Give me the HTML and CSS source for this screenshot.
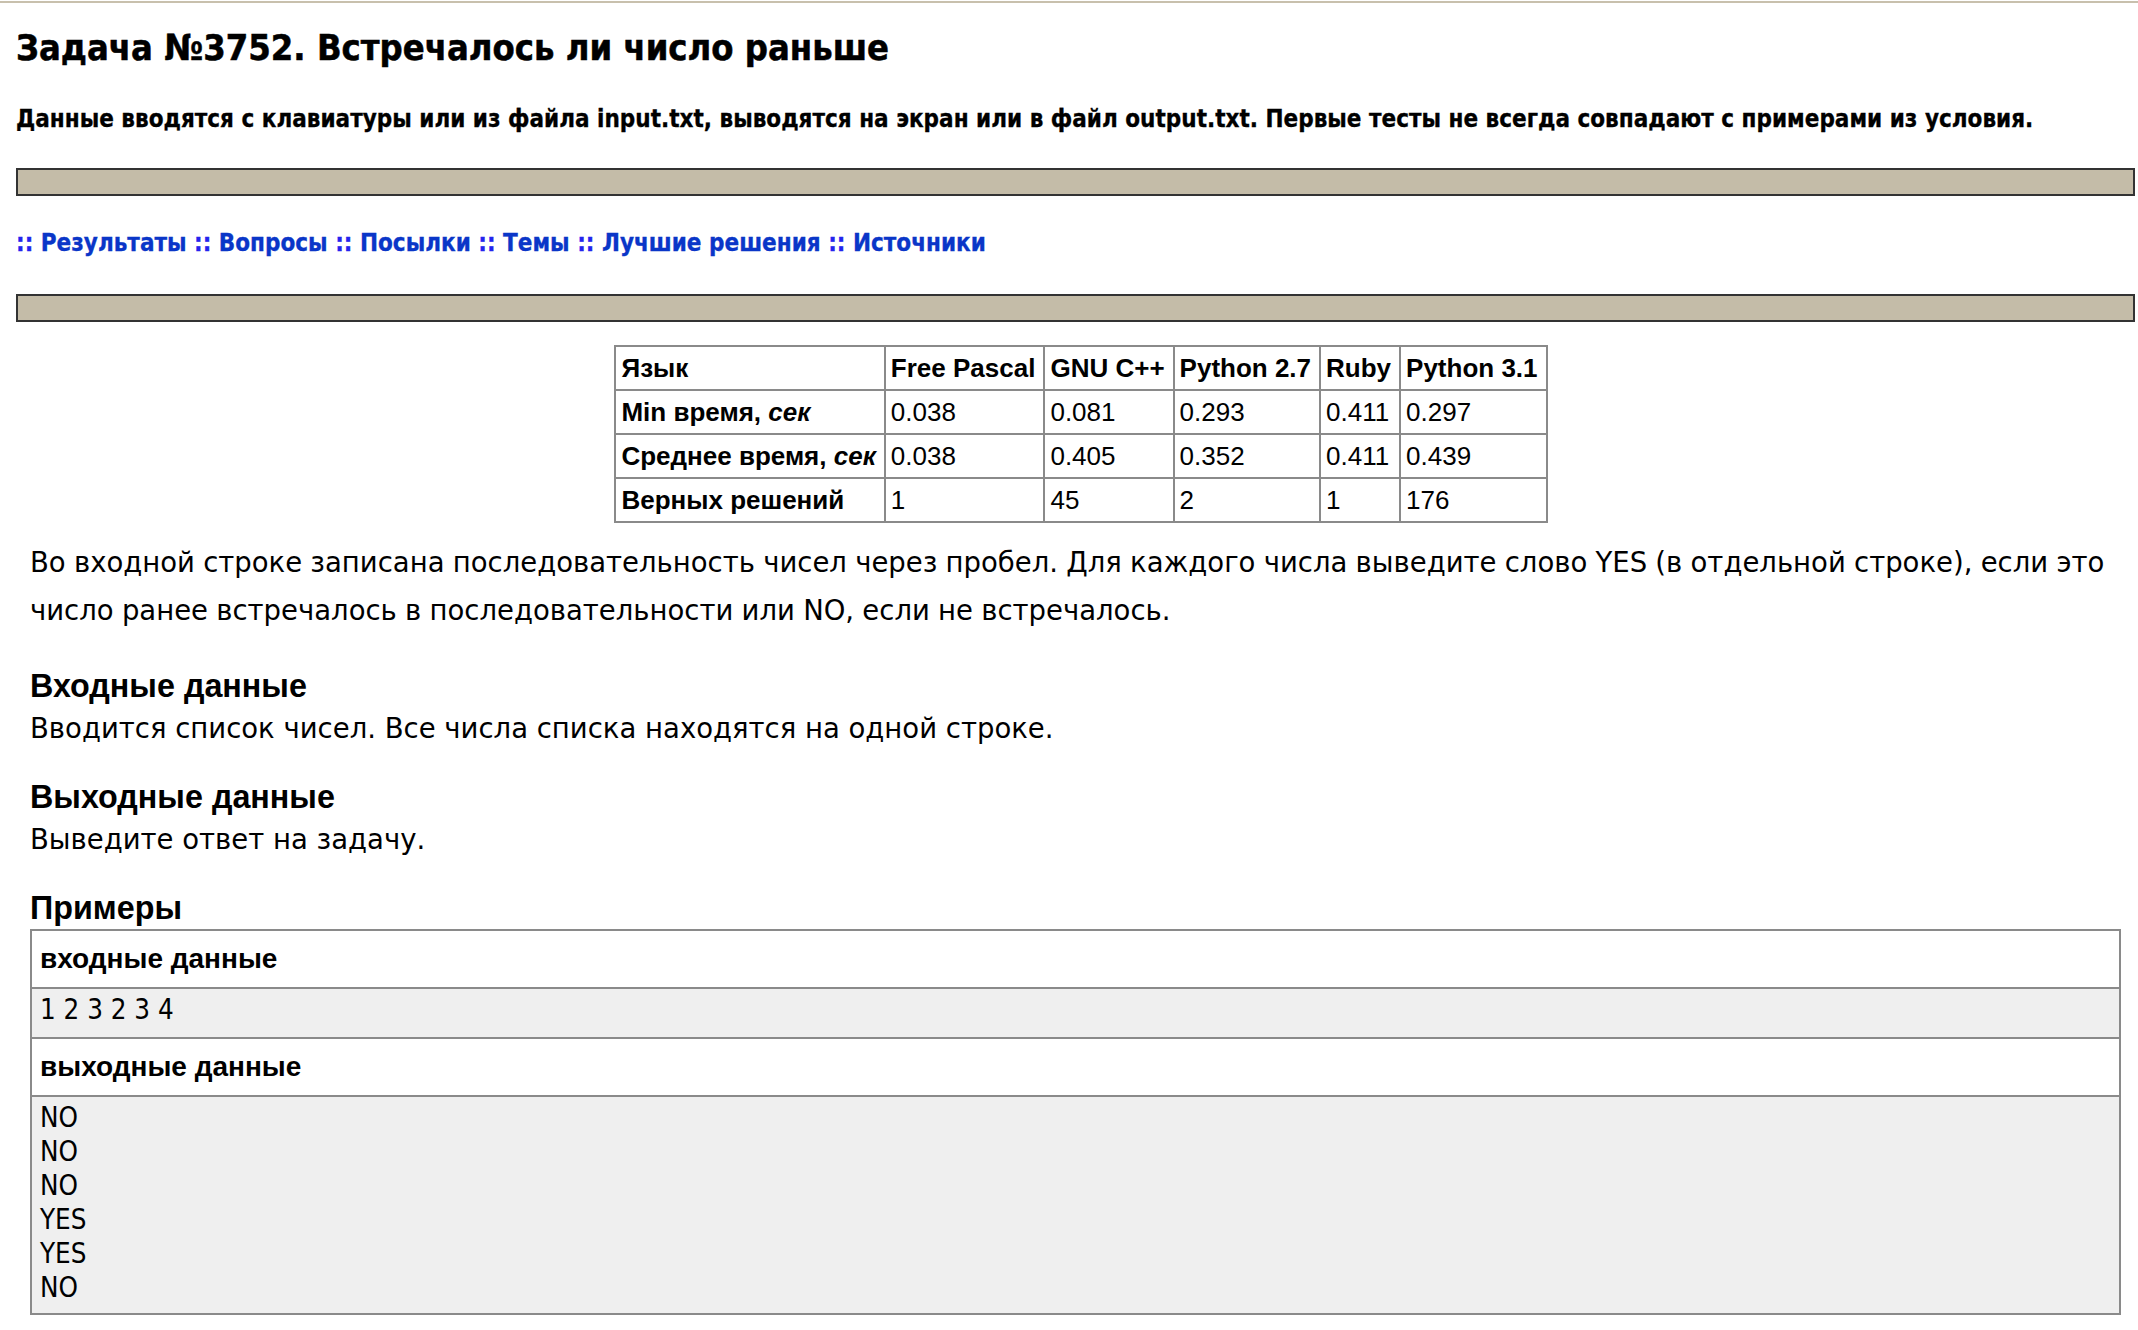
FILE: index.html
```html
<!DOCTYPE html>
<html lang="ru">
<head>
<meta charset="utf-8">
<title>Задача №3752. Встречалось ли число раньше</title>
<link rel="stylesheet" href="styles.css">
</head>
<body>
<div class="topline"></div>
<div class="wrap">
  <h1 class="title">Задача №3752. Встречалось ли число раньше</h1>
  <p class="notice">Данные вводятся с клавиатуры или из файла input.txt, выводятся на экран или в файл output.txt. Первые тесты не всегда совпадают с примерами из условия.</p>
  <div class="bar"></div>
  <nav class="nav"><span class="sep">::</span> <a href="#">Результаты</a> <span class="sep">::</span> <a href="#">Вопросы</a> <span class="sep">::</span> <a href="#">Посылки</a> <span class="sep">::</span> <a href="#">Темы</a> <span class="sep">::</span> <a href="#">Лучшие решения</a> <span class="sep">::</span> <a href="#">Источники</a></nav>
  <div class="bar bar-second"></div>

  <div class="stats-wrap">
    <table class="stats">
      <tr><th>Язык</th><th>Free Pascal</th><th>GNU C++</th><th>Python 2.7</th><th>Ruby</th><th>Python 3.1</th></tr>
      <tr><th>Min время, <i>сек</i></th><td>0.038</td><td>0.081</td><td>0.293</td><td>0.411</td><td>0.297</td></tr>
      <tr><th>Среднее время, <i>сек</i></th><td>0.038</td><td>0.405</td><td>0.352</td><td>0.411</td><td>0.439</td></tr>
      <tr><th>Верных решений</th><td>1</td><td>45</td><td>2</td><td>1</td><td>176</td></tr>
    </table>
  </div>

  <div class="statement">
    <p class="legend">Во входной строке записана последовательность чисел через пробел. Для каждого числа выведите слово YES (в отдельной строке), если это число ранее встречалось в последовательности или NO, если не встречалось.</p>
    <h2 class="section">Входные данные</h2>
    <p class="text">Вводится список чисел. Все числа списка находятся на одной строке.</p>
    <h2 class="section">Выходные данные</h2>
    <p class="text">Выведите ответ на задачу.</p>
    <h2 class="section examples-title">Примеры</h2>
    <div class="examples">
      <div class="ex-head">входные данные</div>
      <pre class="ex-data">1 2 3 2 3 4</pre>
      <div class="ex-head">выходные данные</div>
      <pre class="ex-data ex-last">NO
NO
NO
YES
YES
NO</pre>
    </div>
  </div>
</div>
</body>
</html>
```

FILE: styles.css
```css
html, body {
  margin: 0;
  padding: 0;
  background: #ffffff;
  color: #000000;
}

body {
  font-family: "DejaVu Sans", Verdana, sans-serif;
}

.topline {
  height: 2px;
  margin-top: 1px;
  background: #c8c0ad;
}

.wrap {
  padding: 0 3px 0 16px;
}

.title {
  margin: 23px 0 0 0;
  font-family: "DejaVu Sans Condensed", "DejaVu Sans", sans-serif;
  font-weight: bold;
  font-size: 36px;
  line-height: 44px;
  -webkit-text-stroke: 0.5px #000000;
}

.notice {
  margin: 35px 0 0 0;
  font-family: "DejaVu Sans Condensed", "DejaVu Sans", sans-serif;
  font-weight: bold;
  font-size: 24px;
  line-height: 28px;
  -webkit-text-stroke: 0.3px #000000;
}

.bar {
  margin-top: 35px;
  height: 24px;
  background: #c4bca8;
  border: 2px solid #333333;
}

.nav {
  margin-top: 34px;
  font-family: "DejaVu Sans Condensed", "DejaVu Sans", sans-serif;
  font-weight: bold;
  font-size: 24px;
  line-height: 26px;
}

.nav a {
  color: #0a36c8;
  text-decoration: none;
  -webkit-text-stroke: 0.3px #0a36c8;
}

.nav .sep {
  color: #2424ee;
  -webkit-text-stroke: 0.3px #2424ee;
}

.bar-second {
  margin-top: 38px;
}

.stats-wrap {
  padding-left: 11px;
}

.stats {
  margin: 23px auto 0 auto;
  border-collapse: collapse;
  border: 2px solid #333333;
  font-family: "Liberation Sans", Arial, sans-serif;
  font-size: 26px;
}

.stats th,
.stats td {
  border: 2px solid #8a8a8a;
  padding: 7px 8px 7px 5px;
  text-align: left;
  white-space: nowrap;
  line-height: 28px;
}

.stats th {
  font-weight: bold;
}

.stats td {
  font-weight: normal;
}

.statement {
  margin: 0 14px;
}

.legend {
  margin: 15px 0 0 0;
  font-size: 27.5px;
  line-height: 48px;
  word-spacing: -0.5px;
}

.section {
  margin: 35px 0 0 0;
  font-family: "Liberation Sans", Arial, sans-serif;
  font-weight: bold;
  font-size: 32.3px;
  line-height: 34px;
}

.text {
  margin: 8px 0 0 0;
  font-size: 27.5px;
  line-height: 34px;
}

.examples-title {
  margin-top: 35px;
}

.examples {
  margin-top: 4px;
  border: 2px solid #8a8a8a;
  margin-bottom: 20px;
}

.ex-head {
  padding: 14px 8px 14px 8px;
  background: #ffffff;
  font-family: "Liberation Sans", Arial, sans-serif;
  font-weight: bold;
  font-size: 28px;
  line-height: 28px;
  border-bottom: 2px solid #8a8a8a;
}

.ex-data {
  margin: 0;
  padding: 3px 8px 11px 8px;
  background: #efefef;
  font-family: "DejaVu Sans Condensed", "DejaVu Sans", sans-serif;
  font-size: 27.5px;
  line-height: 34px;
  border-bottom: 2px solid #8a8a8a;
}

.ex-last {
  padding-bottom: 9px;
  border-bottom: none;
}
```
